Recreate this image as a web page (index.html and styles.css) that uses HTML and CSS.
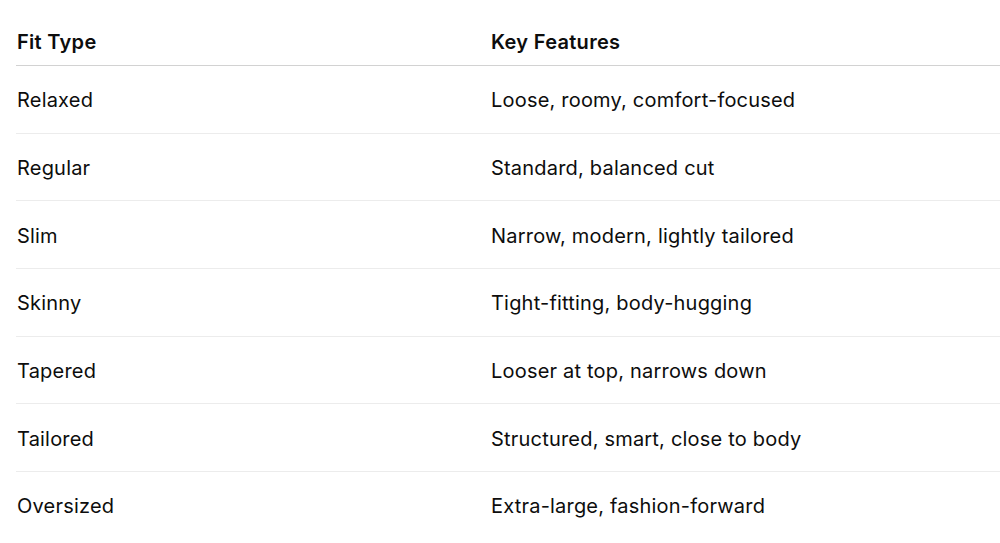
FILE: index.html
```html
<!DOCTYPE html>
<html>
<head>
<meta charset="utf-8">
<link rel="stylesheet" href="styles.css">
</head>
<body>
<div class="table">
  <div class="row head"><div class="cell">Fit Type</div><div class="cell">Key Features</div></div>
  <div class="row"><div class="cell">Relaxed</div><div class="cell">Loose, roomy, comfort-focused</div></div>
  <div class="row"><div class="cell">Regular</div><div class="cell">Standard, balanced cut</div></div>
  <div class="row"><div class="cell">Slim</div><div class="cell">Narrow, modern, lightly tailored</div></div>
  <div class="row"><div class="cell">Skinny</div><div class="cell">Tight-fitting, body-hugging</div></div>
  <div class="row"><div class="cell">Tapered</div><div class="cell">Looser at top, narrows down</div></div>
  <div class="row"><div class="cell">Tailored</div><div class="cell">Structured, smart, close to body</div></div>
  <div class="row last"><div class="cell">Oversized</div><div class="cell">Extra-large, fashion-forward</div></div>
</div>
</body>
</html>
```
FILE: styles.css
```css
html, body {
  margin: 0;
  padding: 0;
  background: #ffffff;
}
body {
  font-family: Inter, "Noto Sans", sans-serif;
  color: #0d0d0d;
  font-size: 20px;
  letter-spacing: 0.2px;
  padding: 19px 0 0 16px;
  overflow: hidden;
}
.table {
  display: flex;
  flex-direction: column;
  width: 1000px;
}
.row {
  display: grid;
  grid-template-columns: 474px 1fr;
  height: 66.67px;
  align-items: center;
  border-bottom: 1px solid #ececec;
}
.row.head {
  height: 46px;
  font-weight: 600;
  letter-spacing: 0.3px;
  border-bottom: 1.5px solid #d2d2d2;
  align-items: start;
}
.row.head .cell {
  padding-top: 11px;
}
.row .cell {
  padding-top: 2px;
}
.row.last {
  border-bottom: none;
}
.cell {
  padding-left: 1px;
  white-space: nowrap;
}
```
